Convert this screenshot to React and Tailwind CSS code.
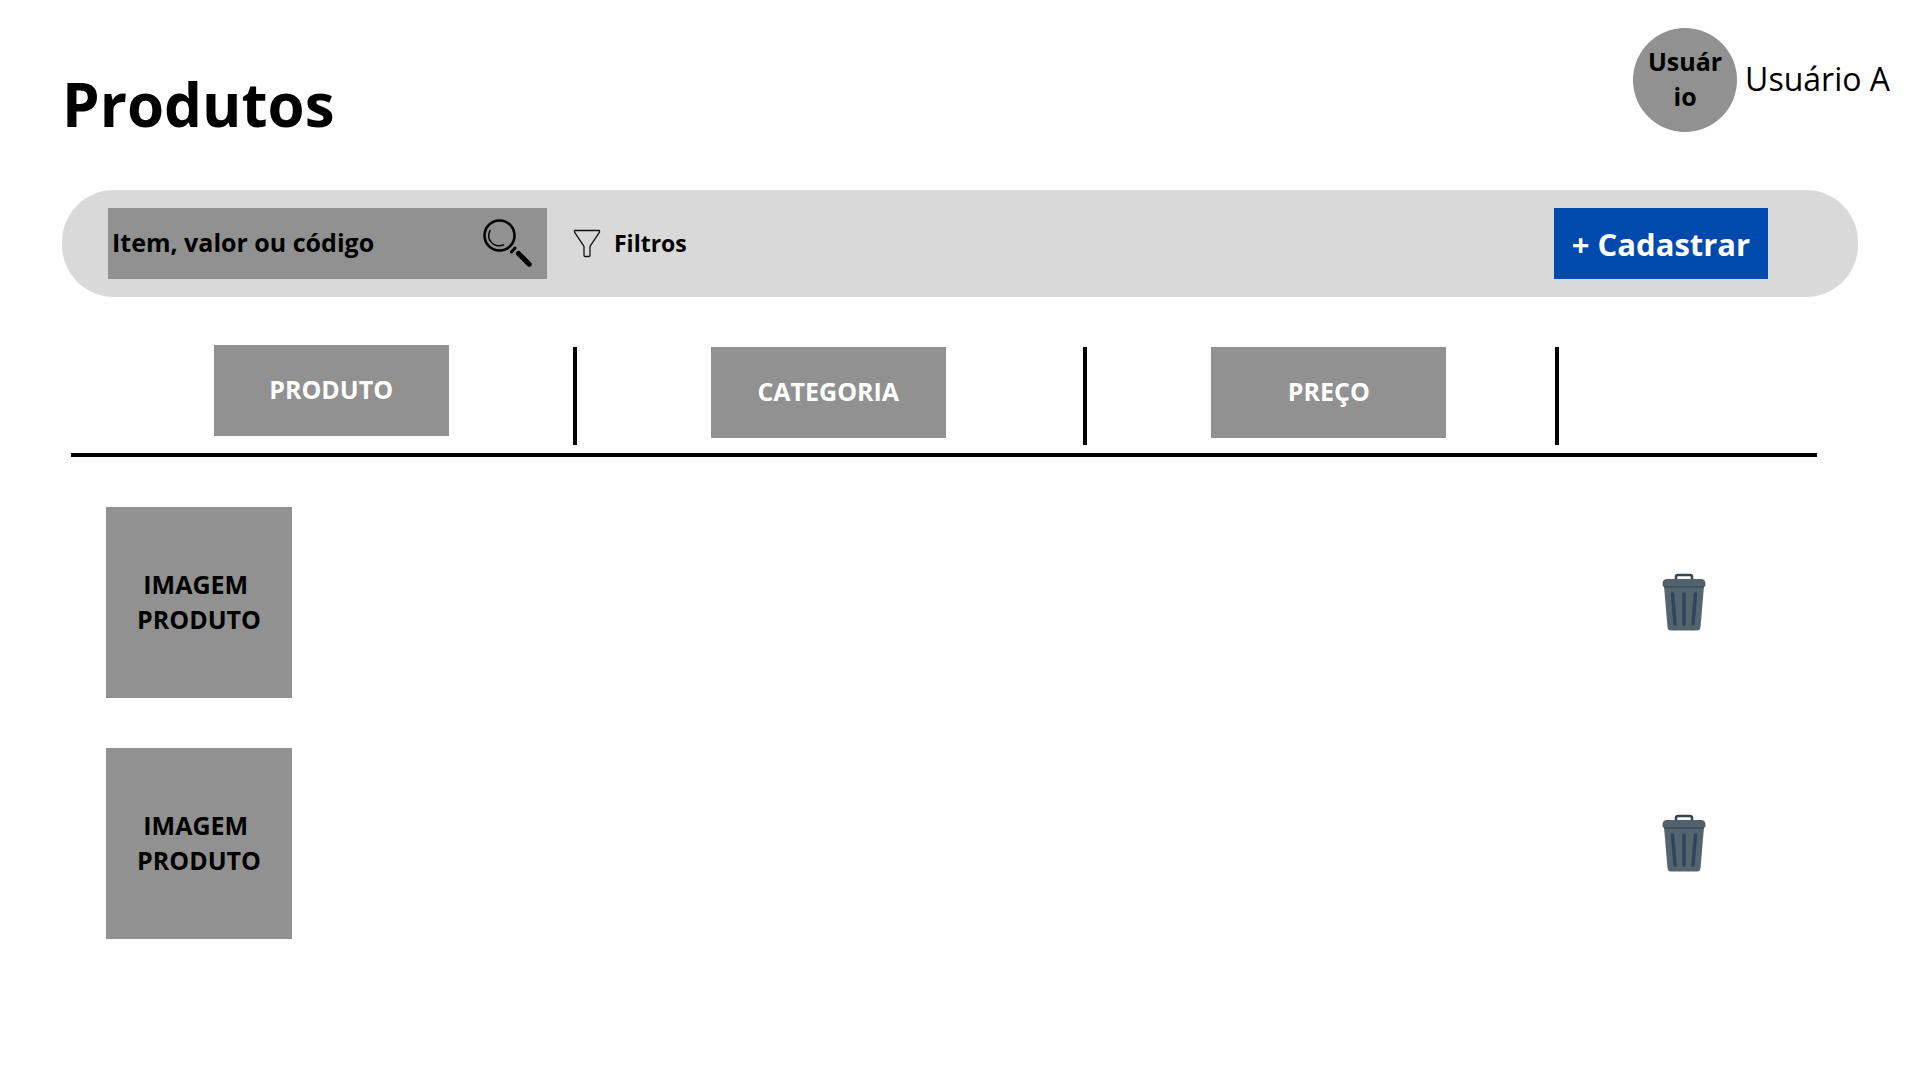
function SearchIcon() {
  return (
    <svg viewBox="0 0 49 48" className="h-12 w-[49px]" fill="none" stroke="#000" aria-hidden="true">
      <circle cx="16.5" cy="16.5" r="15" strokeWidth="2.6" />
      <path d="M7 11.5C2.8 20.5 10 29 20.500 26" strokeWidth="1.5" strokeLinecap="round" />
      <path d="M28.500 33L32 29" strokeWidth="3" strokeLinecap="round" />
      <path d="M35.500 34.500L46.200 45.200" strokeWidth="5" strokeLinecap="round" />
    </svg>
  );
}

function FunnelIcon() {
  return (
    <svg viewBox="0 0 28 29" className="h-[29px] w-7" fill="none" stroke="#111" strokeWidth="1.300" strokeLinejoin="round" aria-hidden="true">
      <path d="M1.500 1.500H26.500V3.200L17 17.300V26.300Q17 27.500 16 27.500H12Q11 27.500 11 26.300V17.300L1.500 3.200Z" />
    </svg>
  );
}

function TrashIcon() {
  return (
    <svg viewBox="0 0 44 58" className="h-[58px] w-11" aria-hidden="true">
      <path d="M14 7V4Q14 2 16 2H28Q30 2 30 4V7" fill="none" stroke="#35444f" strokeWidth="2.500" />
      <path d="M2 13H42L38.500 54Q38.200 57.500 35 57.500H9Q5.800 57.500 5.500 54Z" fill="#546570" />
      <path d="M.5 11Q.5 6 5 6H39Q43.500 6 43.500 11V12Q43.500 14 41.500 14H2.500Q.5 14 .5 12Z" fill="#51626d" />
      <path d="M2 14H42" stroke="#3b4e5d" strokeWidth="1.500" />
      <g stroke="#30455a" strokeWidth="3.500" strokeLinecap="round">
        <path d="M10.500 21L13 51" />
        <path d="M22 21V51" />
        <path d="M33.500 21L31 51" />
      </g>
    </svg>
  );
}

function HeaderCell({ label, className }) {
  return (
    <th scope="col" className="p-0 pb-2 align-top font-bold">
      <div className="flex h-[100px]">
        <div className={`flex flex-1 items-start justify-center ${className}`}>
          <span className="flex h-[91px] w-[235px] items-center justify-center bg-[#919191] pb-1 text-[25px] leading-9 text-white">
            {label}
          </span>
        </div>
        <span className="mt-0.5 w-1 bg-black" />
      </div>
    </th>
  );
}

function ProductRow() {
  return (
    <tr>
      <td className="px-0 pt-[50px] pl-[35px]">
        <div className="flex h-[191px] w-[186px] items-center justify-center bg-[#919191] pb-0.5 text-center text-[25px] leading-[35px] font-bold whitespace-pre">
          {"IMAGEM \nPRODUTO"}
        </div>
      </td>
      <td />
      <td />
      <td className="px-0 pt-12 pr-2">
        <button type="button" aria-label="Excluir produto" className="mx-auto block">
          <TrashIcon />
        </button>
      </td>
    </tr>
  );
}

export default function App() {
  return (
    <main className="min-h-screen bg-white pb-16 font-['Open_Sans','Noto_Sans',sans-serif] text-black">
      <header className="flex items-start justify-between pt-7 pr-[30px] pl-[62px]">
        <h1 className="pt-[35px] text-[60px] leading-[82px] font-bold">Produtos</h1>
        <div className="flex items-center gap-2">
          <div className="flex size-[104px] items-center rounded-full bg-[#919191] px-3 text-center text-[25px] leading-[35px] font-bold">
            <span className="w-full pb-0.5 break-all">Usuário</span>
          </div>
          <span className="pb-0.5 text-[32px] leading-[44px]">Usuário A</span>
        </div>
      </header>

      <section className="mx-[62px] mt-[45px] flex h-[107px] items-center rounded-[52px] bg-[#d9d9d9] pr-[90px] pl-[46px]">
        <label className="flex h-[71px] w-[439px] items-center bg-[#919191] pr-[15px] pb-0.5 pl-1">
          <input
            type="text"
            aria-label="Item, valor ou código"
            placeholder="Item, valor ou código"
            className="min-w-0 flex-1 bg-transparent pb-0.5 text-[25px] leading-9 font-bold outline-none placeholder:text-black placeholder:opacity-100"
          />
          <SearchIcon />
        </label>
        <button type="button" className="ml-[26px] flex items-center gap-[13px] text-[23px] leading-8 font-bold">
          <FunnelIcon />
          <span className="pb-0.5">Filtros</span>
        </button>
        <button type="button" className="ml-auto h-[71px] w-[214px] bg-[#004aad] pt-0.5 text-[31px] font-bold text-white">
          + Cadastrar
        </button>
      </section>

      <div className="mt-12 mr-[103px] ml-[71px]">
        <table className="w-full table-fixed border-collapse">
          <colgroup>
            <col className="w-[29%]" />
            <col className="w-[29.200%]" />
            <col className="w-[27%]" />
            <col />
          </colgroup>
          <thead className="border-b-4 border-black">
            <tr>
              <HeaderCell label="PRODUTO" className="pl-[18px]" />
              <HeaderCell label="CATEGORIA" className="pt-0.5 pr-1" />
              <HeaderCell label="PREÇO" className="pt-0.5 pl-4" />
              <td />
            </tr>
          </thead>
          <tbody>
            <ProductRow />
            <ProductRow />
          </tbody>
        </table>
      </div>
    </main>
  );
}
